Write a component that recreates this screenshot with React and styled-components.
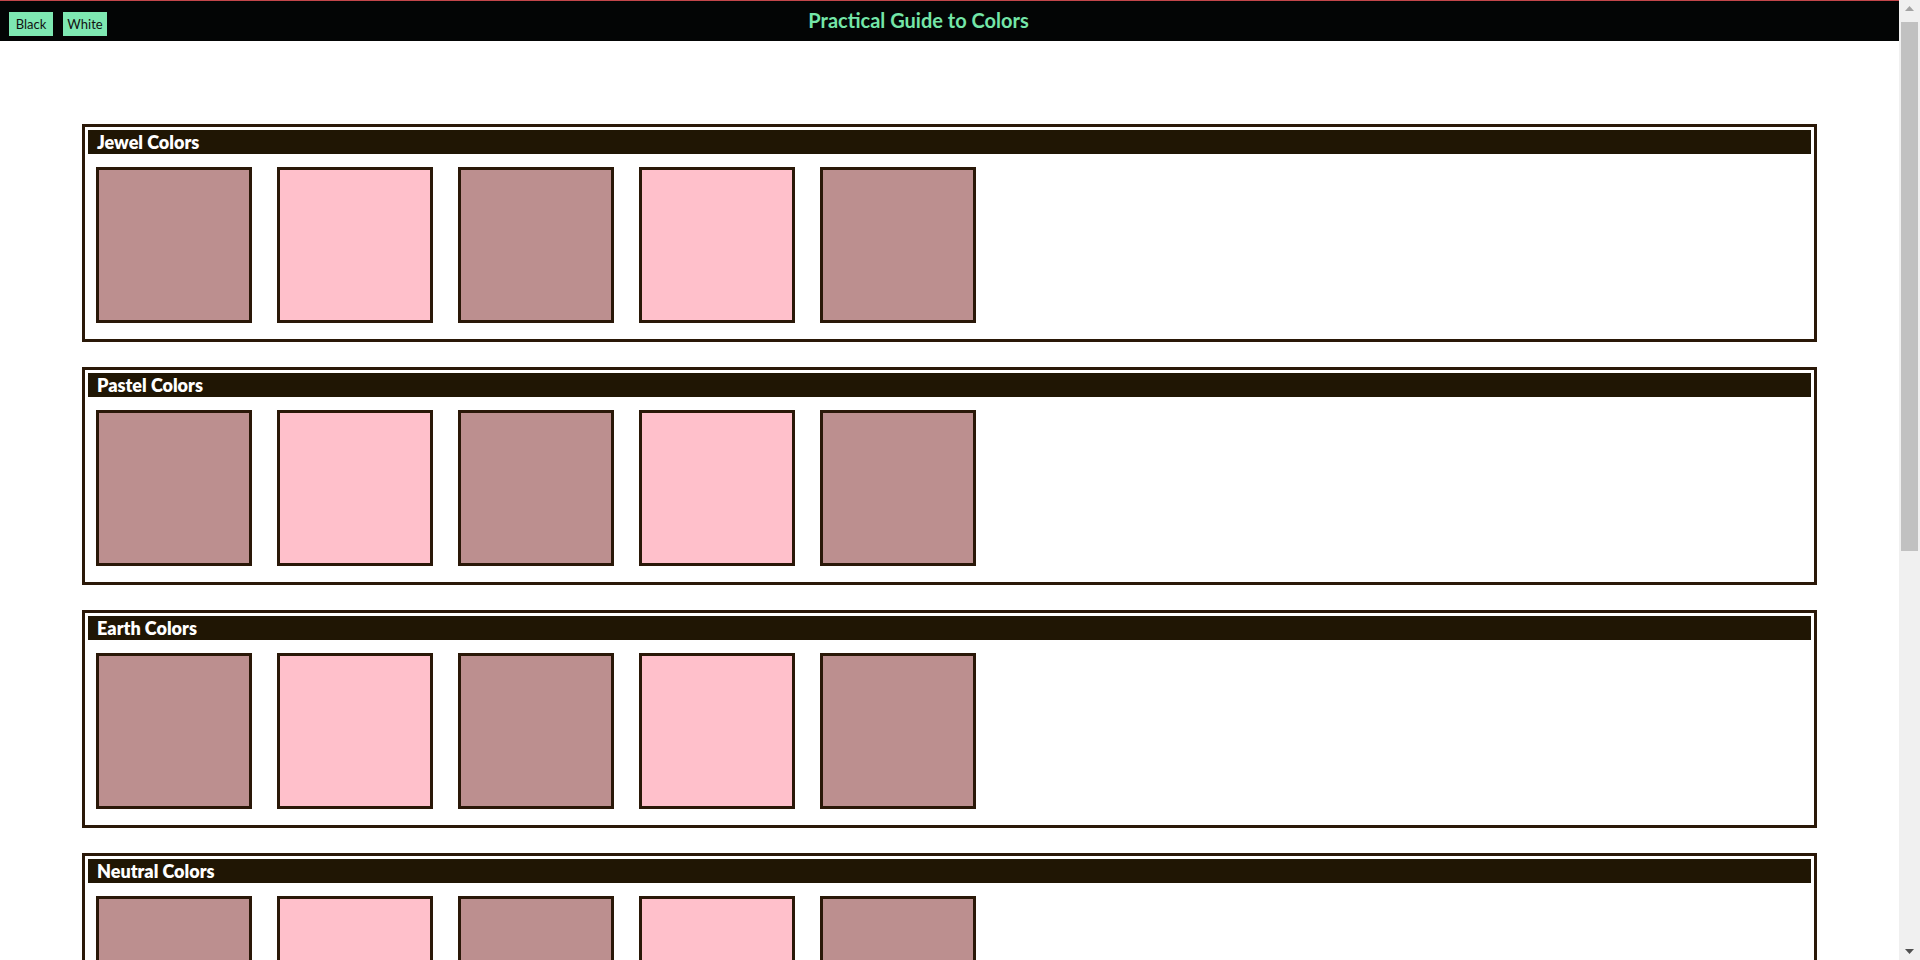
import React from "react";
import styled, { createGlobalStyle } from "styled-components";

const Global = createGlobalStyle`
  html, body { margin: 0; padding: 0; background: #ffffff; }
  body { font-family: Lato, "Open Sans", "Liberation Sans", sans-serif; }
`;

const Page = styled.div`
  margin-right: 21px;
`;

const Header = styled.header`
  display: flex;
  align-items: flex-start;
  background: #030505;
  border-top: 1px solid #c2464a;
  padding: 11px 9px 0;
  box-sizing: border-box;
  height: 41px;
`;

const ButtonGroup = styled.div`
  display: flex;
  gap: 10px;
`;

const ModeButton = styled.button`
  width: 44px;
  height: 24px;
  padding: 0;
  border: none;
  background: #7ee8b2;
  color: #111;
  font-family: Lato, "Open Sans", sans-serif;
  font-size: 13px;
  cursor: pointer;
`;

const Title = styled.h1`
  flex: 1;
  margin: -4px 0 0;
  padding-right: 160px;
  text-align: center;
  color: #74e6a8;
  font-family: Lato, "Open Sans", sans-serif;
  font-weight: 700;
  font-size: 20px;
  line-height: 24px;
`;

const Main = styled.main`
  padding: 83px 82px 60px;
  display: flex;
  flex-direction: column;
  gap: 25px;
`;

const Panel = styled.section`
  border: 3px solid #2a1808;
  padding: 3px;
`;

const PanelTitle = styled.h2`
  margin: 0;
  height: 24px;
  line-height: 25px;
  padding-left: 9px;
  background: #201604;
  color: #ffffff;
  font-family: Lato, "Open Sans", sans-serif;
  font-weight: 800;
  font-size: 18px;
`;

const SwatchRow = styled.div`
  display: flex;
  gap: 25px;
  padding: 13px 0 13px 8px;
`;

const Swatch = styled.div`
  width: 150px;
  height: 150px;
  border: 3px solid #2a1808;
  background: ${(p) => p.$color};
`;

const ScrollRail = styled.div`
  position: fixed;
  top: 0;
  right: 0;
  width: 21px;
  height: 100vh;
  background: #f0f0f0;
  display: flex;
  flex-direction: column;
`;

const ScrollArrow = styled.div`
  height: 17px;
  display: flex;
  align-items: center;
  justify-content: center;
`;

const ScrollTrack = styled.div`
  flex: 1;
  padding: 5px 2px 0;
`;

const ScrollThumb = styled.div`
  height: 529px;
  background: #c1c1c1;
`;

const categories = [
  "Jewel Colors",
  "Pastel Colors",
  "Earth Colors",
  "Neutral Colors",
  "Neon Colors",
  "Metallic Colors",
  "Vintage Colors",
];

const swatches = ["#bc8f8f", "#ffc0cb", "#bc8f8f", "#ffc0cb", "#bc8f8f"];

export default function App() {
  return (
    <>
      <Global />
      <Page>
        <Header>
          <ButtonGroup>
            <ModeButton>Black</ModeButton>
            <ModeButton>White</ModeButton>
          </ButtonGroup>
          <Title>Practical Guide to Colors</Title>
        </Header>
        <Main>
          {categories.map((c) => (
            <Panel key={c}>
              <PanelTitle>{c}</PanelTitle>
              <SwatchRow>
                {swatches.map((s, i) => (
                  <Swatch key={i} $color={s} />
                ))}
              </SwatchRow>
            </Panel>
          ))}
        </Main>
      </Page>
      <ScrollRail>
        <ScrollArrow>
          <svg width="9" height="5" viewBox="0 0 9 5">
            <polygon points="4.5,0 9,5 0,5" fill="#a3a3a3" />
          </svg>
        </ScrollArrow>
        <ScrollTrack>
          <ScrollThumb />
        </ScrollTrack>
        <ScrollArrow>
          <svg width="9" height="5" viewBox="0 0 9 5">
            <polygon points="0,0 9,0 4.5,5" fill="#505050" />
          </svg>
        </ScrollArrow>
      </ScrollRail>
    </>
  );
}
